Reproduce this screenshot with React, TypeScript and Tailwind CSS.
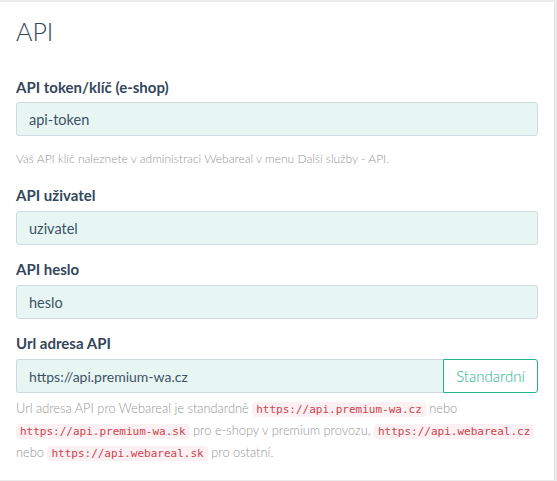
import React from "react";

const Code = ({ children }: { children: React.ReactNode }) => (
  <code className="rounded-[4px] bg-[#fbf1f2] px-[4px] py-[1px] font-['DejaVu_Sans_Mono',monospace] text-[11px] text-[#d2424f]">
    {children}
  </code>
);

const Label = ({ children, className = "" }: { children: React.ReactNode; className?: string }) => (
  <label className={`block text-[15px] font-bold leading-[20px] text-[#33475b] ${className}`}>{children}</label>
);

const inputCls =
  "h-[34px] w-full rounded-[3px] border border-[#cfdbe0] bg-[#e8f6f3] px-[12px] text-[14.5px] text-[#3d5266] outline-none";

export default function App() {
  return (
    <div className="h-[481px] w-[557px] bg-[#ececec] pt-[2px] font-['Lato',sans-serif]">
      <div className="h-[478px] w-[555px] border-r border-[#e2e2e2] bg-white px-4 pt-[14px]">
        <h2 className="text-[25px] font-light leading-[30px] text-[#33475b]">API</h2>

        <Label className="mt-[31px]">API token/klíč (e-shop)</Label>
        <input className={`${inputCls} mt-[5px]`} defaultValue="api-token" />
        <p className="mt-[14px] text-[12px] font-light leading-[18px] text-[#969696]">
          Váš API klíč naleznete v administraci Webareal v menu Další služby - API.
        </p>

        <Label className="mt-[17px]">API uživatel</Label>
        <input className={`${inputCls} mt-[6px]`} defaultValue="uzivatel" />

        <Label className="mt-[14px]">API heslo</Label>
        <input className={`${inputCls} mt-[6px]`} defaultValue="heslo" />

        <Label className="mt-[14px]">Url adresa API</Label>
        <div className="mt-[6px] flex h-[34px]">
          <input
            className="h-[34px] min-w-0 flex-1 rounded-l-[3px] border border-r-0 border-[#cfdbe0] bg-[#e8f6f3] px-[12px] text-[14px] text-[#3d5266] outline-none"
            defaultValue="https://api.premium-wa.cz"
          />
          <button className="h-[34px] w-[95px] rounded-r-[3px] border border-[#25b38c] bg-white text-[15px] font-light text-[#25b38c]">
            Standardní
          </button>
        </div>
        <p className="mt-[5px] text-[12.8px] font-light leading-[20px] text-[#969696]">
          Url adresa API pro Webareal je standardně <Code>https://api.premium-wa.cz</Code> nebo{" "}
          <Code>https://api.premium-wa.sk</Code> pro e-shopy v premium provozu, <Code>https://api.webareal.cz</Code>{" "}
          nebo <Code>https://api.webareal.sk</Code> pro ostatní.
        </p>
      </div>
    </div>
  );
}
